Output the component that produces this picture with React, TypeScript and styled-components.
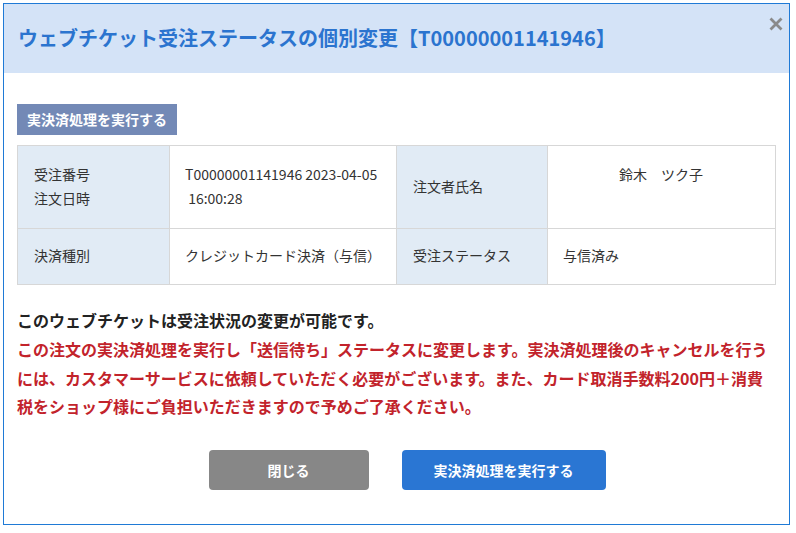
import styled, { createGlobalStyle } from "styled-components";

const GlobalStyle = createGlobalStyle`
	body {
		margin: 0;
		background: #ffffff;
		font-family: "Noto Sans CJK JP", "Noto Sans", sans-serif;
		color: #333333;
	}
`;

const Page = styled.div`
	padding: 3px;
`;

const Dialog = styled.div`
	position: relative;
	width: 785px;
	border: 1px solid #1f7ad6;
	background: #ffffff;
`;

const Header = styled.div`
	height: 69px;
	display: flex;
	align-items: center;
	padding: 0 14px 2px;
	box-sizing: border-box;
	background: #d4e3f7;
`;

const Title = styled.h2`
	margin: 0;
	font-size: 20px;
	font-weight: 700;
	color: #2b74cf;
`;

const CloseButton = styled.button`
	position: absolute;
	top: 11px;
	right: 4px;
	width: 18px;
	height: 18px;
	padding: 0;
	border: none;
	background: transparent;
	display: flex;
	align-items: center;
	justify-content: center;
	cursor: pointer;
`;

const Body = styled.div`
	padding: 31px 13px 34px;
`;

const Badge = styled.div`
	display: inline-block;
	padding: 5px 10px;
	font-size: 14px;
	line-height: 21px;
	font-weight: 700;
	color: #ffffff;
	background: #7389b6;
`;

const InfoTable = styled.table`
	width: 758px;
	margin-top: 10px;
	border-collapse: collapse;
	table-layout: fixed;
`;

const Col = styled.col<{ $w: number }>`
	width: ${(p) => p.$w}px;
`;

const Row = styled.tr<{ $h: number }>`
	height: ${(p) => p.$h}px;
`;

const Label = styled.th`
	padding: 0 16px 3px;
	border: 1px solid #d7d7d7;
	background: #e1ebf5;
	font-size: 14px;
	font-weight: 400;
	line-height: 24px;
	text-align: left;
	vertical-align: middle;
	color: #333333;
`;

const Value = styled.td<{ $center?: boolean }>`
	padding: 0 16px 3px 15px;
	border: 1px solid #d7d7d7;
	font-size: 14px;
	line-height: 24px;
	white-space: nowrap;
	text-align: ${(p) => (p.$center ? "center" : "left")};
	vertical-align: middle;
	color: #333333;
`;

const Notice = styled.div`
	margin-top: 21px;
	font-size: 16px;
	font-weight: 700;
	line-height: 28.8px;
`;

const NoticeLine = styled.p<{ $warn?: boolean }>`
	margin: 0;
	color: ${(p) => (p.$warn ? "#c2232b" : "#222222")};
`;

const Actions = styled.div`
	margin-top: 29px;
	padding-left: 21px;
	display: flex;
	justify-content: center;
	gap: 33px;
`;

const ActionButton = styled.button<{ $primary?: boolean }>`
	min-width: 160px;
	height: 40px;
	padding: 0 32px;
	border: none;
	border-radius: 4px;
	font-family: inherit;
	font-size: 14px;
	font-weight: 700;
	color: #ffffff;
	background: ${(p) => (p.$primary ? "#2a76d3" : "#878787")};
	cursor: pointer;
`;

function CloseIcon()
{
	return (
		<svg width="14" height="14" viewBox="0 0 14 14">
			<path d="M1.5 1.5 L12.5 12.5 M12.5 1.5 L1.5 12.5" stroke="#8a8a8a" strokeWidth="2.8" />
		</svg>
	);
}

export default function App()
{
	const orderNo = "T00000001141946";
	return (
		<Page>
			<GlobalStyle />
			<Dialog>
				<Header>
					<Title>ウェブチケット受注ステータスの個別変更【{orderNo}】</Title>
				</Header>
				<CloseButton aria-label="閉じる"><CloseIcon /></CloseButton>
				<Body>
					<Badge>実決済処理を実行する</Badge>
					<InfoTable>
						<colgroup>
							<Col $w={152} />
							<Col $w={227} />
							<Col $w={151} />
							<Col $w={228} />
						</colgroup>
						<tbody>
							<Row $h={83}>
								<Label>受注番号<br />注文日時</Label>
								<Value>{orderNo} 2023-04-05<br />{"\u00a016:00:28"}</Value>
								<Label>注文者氏名</Label>
								<Value $center>鈴木　ツク子<br />{"\u00a0"}</Value>
							</Row>
							<Row $h={56}>
								<Label>決済種別</Label>
								<Value>クレジットカード決済（与信）</Value>
								<Label>受注ステータス</Label>
								<Value>与信済み</Value>
							</Row>
						</tbody>
					</InfoTable>
					<Notice>
						<NoticeLine>このウェブチケットは受注状況の変更が可能です。</NoticeLine>
						<NoticeLine $warn>
							この注文の実決済処理を実行し「送信待ち」ステータスに変更します。実決済処理後のキャンセルを行うには、カスタマーサービスに依頼していただく必要がございます。また、カード取消手数料200円＋消費税をショップ様にご負担いただきますので予めご了承ください。
						</NoticeLine>
					</Notice>
					<Actions>
						<ActionButton>閉じる</ActionButton>
						<ActionButton $primary>実決済処理を実行する</ActionButton>
					</Actions>
				</Body>
			</Dialog>
		</Page>
	);
}
